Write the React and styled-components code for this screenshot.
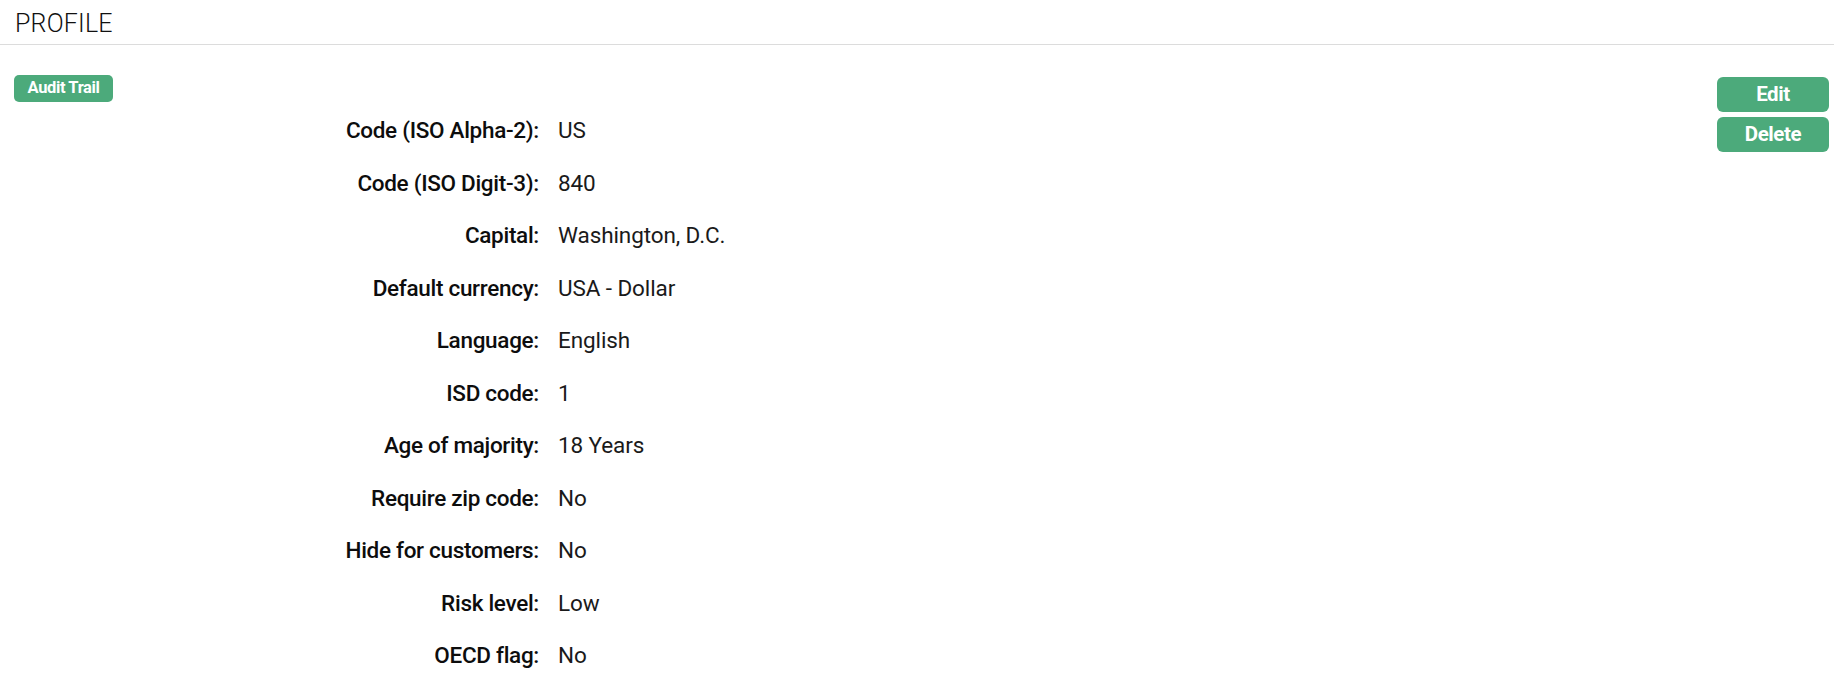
import React from "react";
import styled, { createGlobalStyle } from "styled-components";

const Global = createGlobalStyle`
  html, body { margin: 0; padding: 0; background: #fff; }
  body { font-family: Roboto, "Noto Sans", sans-serif; color: #111; }
  * { box-sizing: border-box; }
`;

const Page = styled.div`
  width: 1834px;
  min-height: 678px;
  background: #fff;
`;

const Header = styled.header`
  height: 45px;
  padding: 0 0 0 15px;
  display: flex;
  align-items: center;
  border-bottom: 1px solid #dcdcdc;
`;

const Title = styled.h1`
  margin: 0;
  font-family: Roboto, sans-serif;
  font-weight: 300;
  font-size: 25px;
  letter-spacing: 0.2px;
  color: #111;
  line-height: 1;
  padding-top: 2px;
`;

const Body = styled.div`
  display: grid;
  grid-template-columns: 120px 1fr 112px;
  padding: 30px 5px 0 14px;
`;

const Side = styled.div`
  display: flex;
  align-items: flex-start;
`;

const Pill = styled.button`
  border: none;
  background: #4caa7b;
  color: #fff;
  font-family: Roboto, sans-serif;
  font-weight: 700;
  font-size: ${(p) => (p.$small ? "16.5px" : "20.5px")};
  border-radius: ${(p) => (p.$small ? "5px" : "6px")};
  height: ${(p) => (p.$small ? "27px" : "35px")};
  width: ${(p) => (p.$small ? "99px" : "112px")};
  padding: 0;
  letter-spacing: -0.4px;
  line-height: 1;
  cursor: pointer;
`;

const Details = styled.dl`
  margin: 0;
  padding-top: 29px;
  display: grid;
  grid-template-columns: 405px 1fr;
  grid-auto-rows: 52.5px;
  column-gap: 19px;
  align-items: center;
`;

const Label = styled.dt`
  margin: 0;
  text-align: right;
  font-weight: 500;
  font-size: 22.5px;
  color: #0d0d0d;
  letter-spacing: -0.3px;
`;

const Value = styled.dd`
  margin: 0;
  font-weight: 400;
  font-size: 22.5px;
  color: #1a1a1a;
  letter-spacing: -0.1px;
`;

const Actions = styled.div`
  display: flex;
  flex-direction: column;
  gap: 5px;
  padding-top: 2px;
`;

const rows = [
  ["Code (ISO Alpha-2):", "US"],
  ["Code (ISO Digit-3):", "840"],
  ["Capital:", "Washington, D.C."],
  ["Default currency:", "USA - Dollar"],
  ["Language:", "English"],
  ["ISD code:", "1"],
  ["Age of majority:", "18 Years"],
  ["Require zip code:", "No"],
  ["Hide for customers:", "No"],
  ["Risk level:", "Low"],
  ["OECD flag:", "No"],
];

export default function App() {
  return (
    <Page>
      <Global />
      <Header>
        <Title>PROFILE</Title>
      </Header>
      <Body>
        <Side>
          <Pill $small>Audit Trail</Pill>
        </Side>
        <Details>
          {rows.map(([l, v]) => (
            <React.Fragment key={l}>
              <Label>{l}</Label>
              <Value>{v}</Value>
            </React.Fragment>
          ))}
        </Details>
        <Actions>
          <Pill>Edit</Pill>
          <Pill>Delete</Pill>
        </Actions>
      </Body>
    </Page>
  );
}
